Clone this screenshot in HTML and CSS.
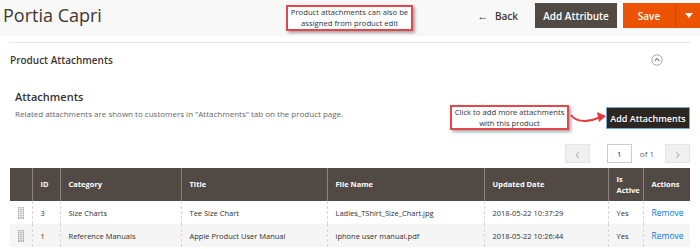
FILE: index.html
```html
<!DOCTYPE html>
<html lang="en">
<head>
  <meta charset="UTF-8">
  <title>Portia Capri</title>
  <link rel="stylesheet" href="styles.css">
</head>
<body>
  <div class="page-header">
    <h1 class="page-title">Portia Capri</h1>
    <div class="note note-top">Product attachments can also be<br>assigned from product edit</div>
    <div class="page-actions">
      <button class="back-btn"><span class="back-arrow">&larr;</span> Back</button>
      <button class="btn-secondary">Add Attribute</button>
      <div class="split-save">
        <button class="save-main">Save</button>
        <button class="save-toggle"><span class="caret"></span></button>
      </div>
    </div>
  </div>

  <div class="content">
    <div class="section-head">
      <span class="section-title">Product Attachments</span>
      <svg class="collapse-icon" width="12" height="12" viewBox="0 0 12 12">
        <circle cx="6" cy="6" r="5.2" fill="none" stroke="#a9a9a9" stroke-width="1"/>
        <path d="M3.6 7 L6 4.6 L8.4 7" fill="none" stroke="#8a8a8a" stroke-width="1.1"/>
      </svg>
    </div>

    <div class="attach-row">
      <div class="attach-info">
        <h2 class="attach-title">Attachments</h2>
        <p class="attach-desc">Related attachments are shown to customers in "Attachments" tab on the product page.</p>
      </div>
      <div class="note note-add">Click to add more attachments<br>with this product</div>
      <svg class="note-arrow" width="38" height="16" viewBox="0 0 38 16">
        <path d="M1 5 C6 12, 18 13, 30 7" fill="none" stroke="#e5393c" stroke-width="2"/>
        <path d="M27 2 L36 6 L29 12 Z" fill="#e5393c"/>
      </svg>
      <button class="btn-dark">Add Attachments</button>
    </div>

    <div class="pager">
      <button class="pager-btn">&#8249;</button>
      <input class="pager-input" type="text" value="1">
      <span class="pager-total">of 1</span>
      <button class="pager-btn">&#8250;</button>
    </div>

    <table class="grid">
      <colgroup>
        <col style="width:22px">
        <col style="width:28px">
        <col style="width:121px">
        <col style="width:146px">
        <col style="width:157px">
        <col style="width:124px">
        <col style="width:35px">
        <col style="width:47px">
      </colgroup>
      <thead>
        <tr>
          <th></th>
          <th>ID</th>
          <th>Category</th>
          <th>Title</th>
          <th>File Name</th>
          <th>Updated Date</th>
          <th>Is<br>Active</th>
          <th>Actions</th>
        </tr>
      </thead>
      <tbody>
        <tr>
          <td class="drag">
            <svg class="handle" width="6" height="12" viewBox="0 0 6 12">
              <g fill="#a5a5a5">
                <rect x="0" y="0" width="1.3" height="12"/>
                <rect x="2.3" y="0" width="1.3" height="12"/>
                <rect x="4.6" y="0" width="1.3" height="12"/>
              </g>
              <g fill="#fff" opacity="0.75">
                <rect x="0" y="1.3" width="6" height="0.7"/>
                <rect x="0" y="3.3" width="6" height="0.7"/>
                <rect x="0" y="5.3" width="6" height="0.7"/>
                <rect x="0" y="7.3" width="6" height="0.7"/>
                <rect x="0" y="9.3" width="6" height="0.7"/>
              </g>
            </svg>
          </td>
          <td>3</td>
          <td>Size Charts</td>
          <td>Tee Size Chart</td>
          <td>Ladies_TShirt_Size_Chart.jpg</td>
          <td>2018-05-22 10:37:29</td>
          <td>Yes</td>
          <td><a class="remove" href="#">Remove</a></td>
        </tr>
        <tr class="alt">
          <td class="drag">
            <svg class="handle" width="6" height="12" viewBox="0 0 6 12">
              <g fill="#a5a5a5">
                <rect x="0" y="0" width="1.3" height="12"/>
                <rect x="2.3" y="0" width="1.3" height="12"/>
                <rect x="4.6" y="0" width="1.3" height="12"/>
              </g>
              <g fill="#f5f5f5" opacity="0.75">
                <rect x="0" y="1.3" width="6" height="0.7"/>
                <rect x="0" y="3.3" width="6" height="0.7"/>
                <rect x="0" y="5.3" width="6" height="0.7"/>
                <rect x="0" y="7.3" width="6" height="0.7"/>
                <rect x="0" y="9.3" width="6" height="0.7"/>
              </g>
            </svg>
          </td>
          <td>1</td>
          <td>Reference Manuals</td>
          <td>Apple Product User Manual</td>
          <td>iphone user manual.pdf</td>
          <td>2018-05-22 10:26:44</td>
          <td>Yes</td>
          <td><a class="remove" href="#">Remove</a></td>
        </tr>
      </tbody>
    </table>
  </div>
</body>
</html>
```

FILE: styles.css
```css
* {
  box-sizing: border-box;
}

body {
  margin: 0;
  background-color: #fff;
  font-family: 'Open Sans', sans-serif;
  color: #303030;
  overflow: hidden;
}

button {
  font-family: inherit;
  cursor: pointer;
}

.page-header {
  position: relative;
  display: flex;
  align-items: flex-start;
  height: 36px;
  padding-top: 3px;
  background-color: #f8f8f8;
}

.page-title {
  margin: 0 0 0 3px;
  font-size: 18px;
  font-weight: 400;
  line-height: 25px;
  color: #41362f;
}

.note {
  position: absolute;
  background-color: #fff;
  border: 2px solid #e2484b;
  box-shadow: 2px 2px 3px rgba(0, 0, 0, 0.35);
  font-size: 7.7px;
  line-height: 11px;
  color: #333;
  text-align: center;
  white-space: nowrap;
  display: flex;
  align-items: center;
  justify-content: center;
}

.note-top {
  left: 286px;
  top: 5px;
  width: 127px;
  height: 26px;
}

.page-actions {
  display: flex;
  align-items: center;
  margin-left: auto;
}

.back-btn {
  background: none;
  border: none;
  padding: 0;
  height: 25px;
  margin-right: 17px;
  font-size: 10px;
  font-weight: 600;
  color: #41362f;
}

.back-arrow {
  margin-right: 4px;
  font-size: 11px;
}

.btn-secondary {
  height: 25px;
  width: 82px;
  padding: 0;
  margin-right: 6px;
  background-color: #514943;
  border: 1px solid #514943;
  color: #fff;
  font-size: 10px;
  font-weight: 600;
}

.split-save {
  display: flex;
}

.save-main {
  height: 25px;
  width: 53px;
  padding: 0;
  background-color: #eb5202;
  border: none;
  border-right: 1px solid #c94603;
  color: #fff;
  font-size: 10px;
  font-weight: 600;
}

.save-toggle {
  height: 25px;
  width: 24px;
  padding: 0;
  background-color: #eb5202;
  border: none;
  display: flex;
  align-items: center;
  justify-content: center;
}

.caret {
  width: 0;
  height: 0;
  border-left: 4px solid transparent;
  border-right: 4px solid transparent;
  border-top: 5px solid #fff;
  margin-left: 2px;
}

.content {
  margin: 6px 10px 0;
  border-top: 1px solid #e3e3e3;
}

.section-head {
  display: flex;
  align-items: center;
  justify-content: space-between;
  height: 33px;
  padding-right: 27px;
}

.section-title {
  font-size: 10px;
  font-weight: 600;
  color: #41362f;
}

.collapse-icon {
  display: block;
}

.attach-row {
  position: relative;
  display: flex;
  align-items: flex-start;
  padding-top: 13px;
}

.attach-info {
  padding-left: 5px;
}

.attach-title {
  margin: 0 0 2px;
  font-size: 11px;
  font-weight: 600;
  line-height: 16px;
  color: #333;
}

.attach-desc {
  margin: 0;
  font-size: 8px;
  line-height: 14px;
  color: #666;
}

.note-add {
  left: 440px;
  top: 29px;
  width: 119px;
  height: 25px;
}

.note-arrow {
  position: absolute;
  left: 560px;
  top: 34px;
}

.btn-dark {
  margin: 18px 0 0 auto;
  width: 84px;
  height: 22px;
  padding: 0;
  background-color: #2b2622;
  border: 1px solid #77a9d6;
  color: #fff;
  font-size: 9px;
  font-weight: 600;
}

.pager {
  display: flex;
  align-items: center;
  justify-content: flex-end;
  margin-top: 15px;
  height: 19px;
}

.pager-btn {
  width: 25px;
  height: 19px;
  padding: 0;
  background-color: #f0f0f0;
  border: 1px solid #e4e4e4;
  color: #b0b0b0;
  font-size: 14px;
  line-height: 15px;
}

.pager-input {
  width: 25px;
  height: 19px;
  margin-left: 17px;
  border: 1px solid #ccc;
  font-family: inherit;
  font-size: 8px;
  text-align: center;
  color: #333;
  padding: 0;
}

.pager-total {
  margin: 0 11px 0 8px;
  font-size: 8px;
  color: #666;
}

.grid {
  width: 680px;
  margin-top: 5px;
  border-collapse: collapse;
  table-layout: fixed;
  font-size: 7.5px;
}

.grid th {
  height: 33px;
  padding: 0 8px;
  background-color: #514943;
  border-left: 1px solid #8a837f;
  color: #fff;
  font-weight: 700;
  text-align: left;
  line-height: 11px;
}

.grid th:first-child {
  border-left: none;
}

.grid td {
  height: 23px;
  padding: 0 8px;
  border-left: 1px dashed #d6d6d6;
  color: #303030;
  white-space: nowrap;
  overflow: hidden;
}

.grid td:first-child {
  border-left: none;
}

.grid tr.alt td {
  background-color: #f5f5f5;
}

.grid td.drag {
  padding: 0 0 0 8px;
}

.handle {
  display: block;
}

.remove {
  color: #007bdb;
  text-decoration: none;
  font-size: 8.5px;
}
```
